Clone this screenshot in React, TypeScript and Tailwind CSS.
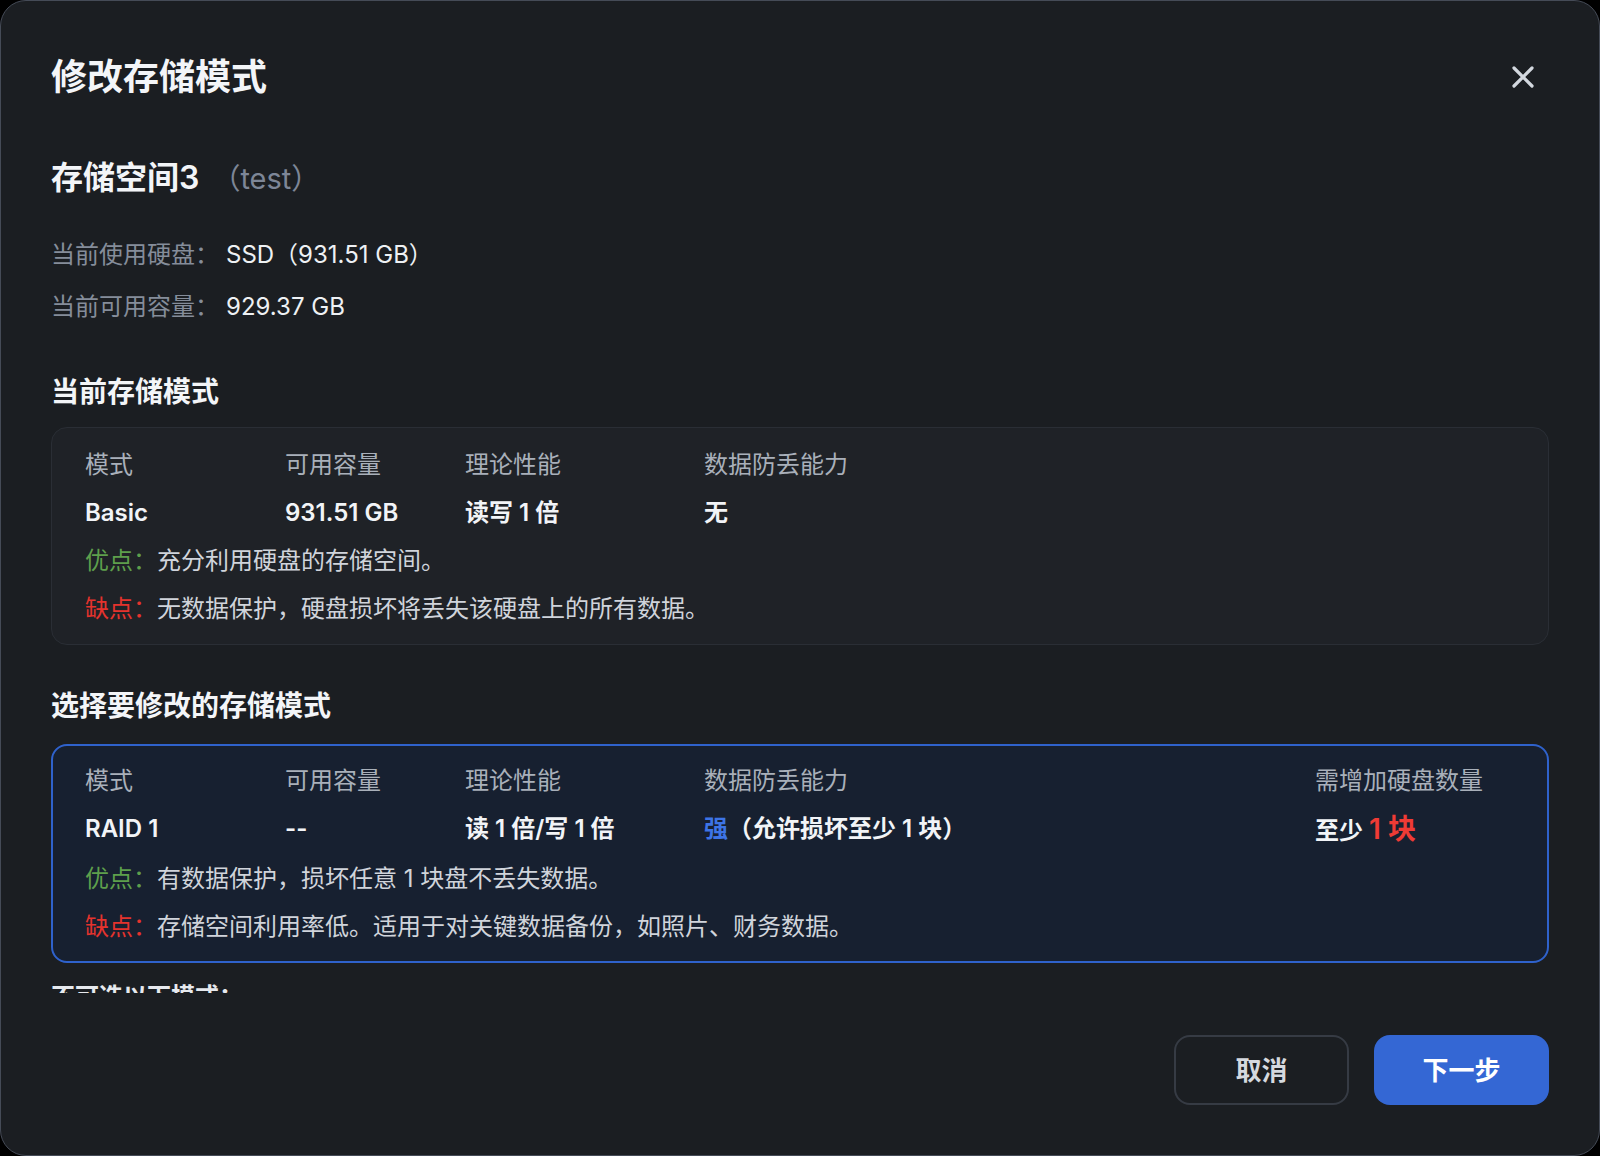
import React from 'react';

const font = { fontFamily: '"Inter", "Noto Sans CJK SC", "Noto Sans", sans-serif' };

interface ModeRow {
  mode: string;
  capacity: string;
  perf: string;
  safety: React.ReactNode;
  pros: string;
  cons: string;
  extra?: React.ReactNode;
}

const current: ModeRow = {
  mode: 'Basic',
  capacity: '931.51 GB',
  perf: '读写 1 倍',
  safety: '无',
  pros: '充分利用硬盘的存储空间。',
  cons: '无数据保护，硬盘损坏将丢失该硬盘上的所有数据。',
};

const target: ModeRow = {
  mode: 'RAID 1',
  capacity: '--',
  perf: '读 1 倍/写 1 倍',
  safety: (
    <>
      <span className="text-[#3d74e6]">强</span>（允许损坏至少 1 块）
    </>
  ),
  pros: '有数据保护，损坏任意 1 块盘不丢失数据。',
  cons: '存储空间利用率低。适用于对关键数据备份，如照片、财务数据。',
  extra: (
    <>
      至少 <span className="text-[28px] text-[#ef3b35]">1 块</span>
    </>
  ),
};

const ModeCard: React.FC<{ row: ModeRow; selected?: boolean }> = ({ row, selected }) => (
  <div
    className={`grid grid-cols-[200px_180px_239px_1fr_200px] text-[24px] leading-[48px] ${
      selected
        ? 'border-2 border-[#2f62cc] bg-[#172030] rounded-[16px] px-[32px] pt-[11px] pb-[10px]'
        : 'border border-[#2a2e35] bg-[#1f2227] rounded-[16px] px-[33px] pt-[13px] pb-[11px]'
    }`}
  >
    <div className="text-[#a9b0ba]">模式</div>
    <div className="text-[#a9b0ba]">可用容量</div>
    <div className="text-[#a9b0ba]">理论性能</div>
    <div className="text-[#a9b0ba]">数据防丢能力</div>
    <div className="text-[#a9b0ba]">{row.extra ? '需增加硬盘数量' : ''}</div>

    <div className="font-semibold text-[#f2f4f7]">{row.mode}</div>
    <div className="font-semibold text-[#f2f4f7]">{row.capacity}</div>
    <div className="font-semibold text-[#f2f4f7]">{row.perf}</div>
    <div className="font-semibold text-[#f2f4f7]">{row.safety}</div>
    <div className="font-semibold text-[#f2f4f7]">{row.extra}</div>

    <div className="col-span-5 text-[#d0d4db]">
      <span className="text-[#5e9f4c]">优点：</span>
      {row.pros}
    </div>
    <div className="col-span-5 text-[#d0d4db]">
      <span className="text-[#e5332d]">缺点：</span>
      {row.cons}
    </div>
  </div>
);

export default function App() {
  return (
    <div className="w-[1600px] h-[1156px] bg-black" style={font}>
      <div className="w-full h-full flex flex-col bg-[#1b1e22] border border-[#454b57] rounded-[26px] overflow-hidden">
        {/* header */}
        <div className="flex items-center justify-between px-[50px] pt-[54px]">
          <h1 className="text-[36px] leading-[44px] font-semibold text-[#f3f5f8]">修改存储模式</h1>
          <button className="w-[52px] h-[44px] flex items-center justify-center text-[#d3d8df]">
            <svg width="22" height="22" viewBox="0 0 22 22" fill="none">
              <path d="M2 2L20 20M20 2L2 20" stroke="currentColor" strokeWidth="3.2" strokeLinecap="round" />
            </svg>
          </button>
        </div>

        {/* scroll content */}
        <div className="h-[894px] overflow-hidden px-[50px] pt-[57px]">
          <div className="flex items-baseline leading-[44px]">
            <span className="text-[32px] font-semibold text-[#f3f5f8]">存储空间3</span>
            <span className="ml-[12px] text-[29px] text-[#7d8697]">（test）</span>
          </div>

          <div className="mt-[36px] text-[24px] leading-[36px]">
            <div className="flex">
              <span className="w-[175px] text-[#858d9a]">当前使用硬盘：</span>
              <span className="text-[#eef1f4]">SSD（931.51 GB）</span>
            </div>
            <div className="flex mt-[16px]">
              <span className="w-[175px] text-[#858d9a]">当前可用容量：</span>
              <span className="text-[#eef1f4]">929.37 GB</span>
            </div>
          </div>

          <h2 className="mt-[47px] text-[28px] leading-[40px] font-semibold text-[#f3f5f8]">当前存储模式</h2>
          <div className="mt-[15px]">
            <ModeCard row={current} />
          </div>

          <h2 className="mt-[41px] text-[28px] leading-[40px] font-semibold text-[#f3f5f8]">选择要修改的存储模式</h2>
          <div className="mt-[18px]">
            <ModeCard row={target} selected />
          </div>

          <div className="mt-[16px] text-[24px] leading-[36px] font-semibold text-[#e6e9ee]">不可选以下模式：</div>
        </div>

        {/* footer */}
        <div className="flex-1 flex justify-end items-start gap-[25px] px-[50px] pt-[42px]">
          <button className="w-[175px] h-[70px] rounded-[16px] border-2 border-[#363b44] text-[26px] font-semibold text-[#d5d9df]">
            取消
          </button>
          <button className="w-[175px] h-[70px] rounded-[16px] bg-[#3467d4] text-[26px] font-semibold text-white">
            下一步
          </button>
        </div>
      </div>
    </div>
  );
}
